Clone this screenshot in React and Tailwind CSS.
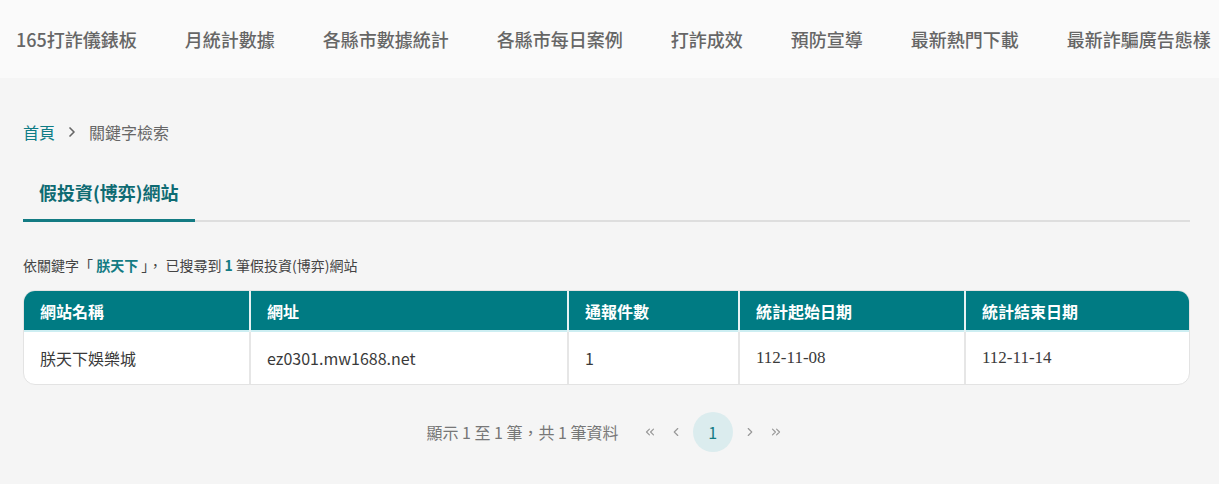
import { ChevronRight, ChevronLeft, ChevronsLeft, ChevronsRight } from "lucide-react";

const navItems = [
  "165打詐儀錶板",
  "月統計數據",
  "各縣市數據統計",
  "各縣市每日案例",
  "打詐成效",
  "預防宣導",
  "最新熱門下載",
  "最新詐騙廣告態樣",
];

const font = { fontFamily: '"Noto Sans CJK TC", "Noto Sans", sans-serif' };
const serif = { fontFamily: '"Liberation Serif", serif' };

function App() {
  return (
    <div className="min-h-[484px] bg-[#f5f5f5] text-[#555]" style={font}>
      {/* top nav */}
      <div className="h-[78px] bg-[#fafafa] flex items-center pl-4 gap-[48px] overflow-hidden whitespace-nowrap">
        {navItems.map((item) => (
          <span key={item} className="text-[18px] font-medium text-[#666] shrink-0">
            {item}
          </span>
        ))}
      </div>

      <div className="px-[23px] pr-[29px]">
        {/* breadcrumb */}
        <div className="flex items-center mt-[42px] text-[16px] h-6">
          <span className="text-[#0e7c86]">首頁</span>
          <ChevronRight className="w-4 h-4 mx-[9px] text-[#666]" strokeWidth={2.5} />
          <span className="text-[#666]">關鍵字檢索</span>
        </div>

        {/* tabs */}
        <div className="mt-[35px] border-b-2 border-[#dedede] flex">
          <div className="px-[16px] pb-[13px] text-[18px] font-bold text-[#0e6b73] border-b-[3px] border-[#137b83] -mb-[2px]">
            假投資(博弈)網站
          </div>
        </div>

        {/* search result */}
        <p className="mt-[33px] text-[14px] text-[#444]">
          依關鍵字「 <span className="font-bold text-[#137b83]">朕天下</span> 」， 已搜尋到{" "}
          <span className="font-bold text-[#137b83]">1</span> 筆假投資(博弈)網站
        </p>

        {/* table */}
        <div className="mt-[14px] rounded-xl overflow-hidden bg-white border border-[#e3e3e3]">
          <table className="w-full border-collapse text-[16px] table-fixed">
            <colgroup>
              <col className="w-[226px]" />
              <col className="w-[318px]" />
              <col className="w-[171px]" />
              <col className="w-[226px]" />
              <col />
            </colgroup>
            <thead>
              <tr className="bg-[#007b83] text-white h-[40px] border-b-2 border-[#cdeef2]">
                {["網站名稱", "網址", "通報件數", "統計起始日期", "統計結束日期"].map((h, i) => (
                  <th
                    key={h}
                    className={`text-left font-bold px-4 ${i > 0 ? "border-l-2 border-[#e6f2f3]" : ""}`}
                  >
                    {h}
                  </th>
                ))}
              </tr>
            </thead>
            <tbody>
              <tr className="h-[53px] text-[#3a3a3a]">
                <td className="px-4">朕天下娛樂城</td>
                <td className="px-4 border-l-2 border-[#e6e6e6]">ez0301.mw1688.net</td>
                <td className="px-4 border-l-2 border-[#e6e6e6]">1</td>
                <td className="px-4 border-l-2 border-[#e6e6e6] text-[17px]" style={serif}>
                  112-11-08
                </td>
                <td className="px-4 border-l-2 border-[#e6e6e6] text-[17px]" style={serif}>
                  112-11-14
                </td>
              </tr>
            </tbody>
          </table>
        </div>

        {/* pagination */}
        <div className="flex items-center justify-center mt-[27px] text-[16px] text-[#777] pl-[2px]">
          <span className="mr-[18px]">顯示 1 至 1 筆，共 1 筆資料</span>
          <ChevronsLeft className="w-[14px] h-[14px] text-[#999] mx-[6px]" />
          <ChevronLeft className="w-[14px] h-[14px] text-[#999] mx-[6px]" />
          <span className="w-10 h-10 rounded-full bg-[#dbecee] text-[#137b83] flex items-center justify-center mx-[4px]">
            1
          </span>
          <ChevronRight className="w-[14px] h-[14px] text-[#999] mx-[6px]" />
          <ChevronsRight className="w-[14px] h-[14px] text-[#999] mx-[6px]" />
        </div>
      </div>
    </div>
  );
}

export default App;
